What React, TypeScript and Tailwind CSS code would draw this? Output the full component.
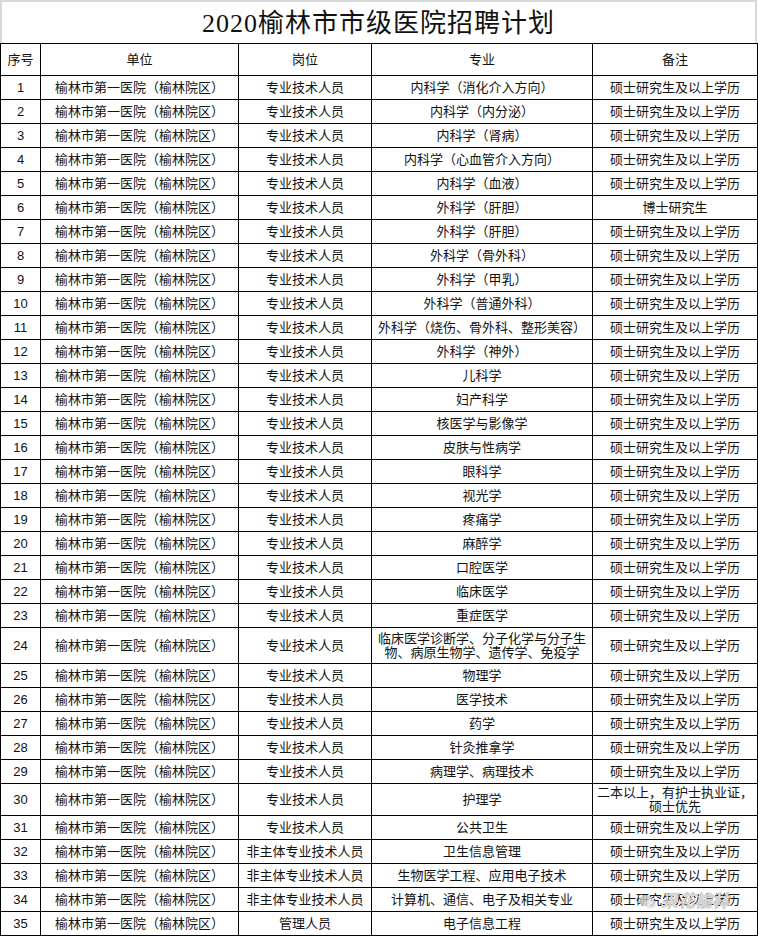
const unit = "榆林市第一医院（榆林院区）"
const tech = "专业技术人员"
const nonMain = "非主体专业技术人员"
const master = "硕士研究生及以上学历"

type Row = { post?: string; major: string[]; note?: string[]; h?: string }

const rows: Row[] = [
  { major: ["内科学（消化介入方向）"] },
  { major: ["内科学（内分泌）"] },
  { major: ["内科学（肾病）"] },
  { major: ["内科学（心血管介入方向）"] },
  { major: ["内科学（血液）"] },
  { major: ["外科学（肝胆）"], note: ["博士研究生"] },
  { major: ["外科学（肝胆）"] },
  { major: ["外科学（骨外科）"] },
  { major: ["外科学（甲乳）"] },
  { major: ["外科学（普通外科）"] },
  { major: ["外科学（烧伤、骨外科、整形美容）"] },
  { major: ["外科学（神外）"] },
  { major: ["儿科学"] },
  { major: ["妇产科学"] },
  { major: ["核医学与影像学"] },
  { major: ["皮肤与性病学"] },
  { major: ["眼科学"] },
  { major: ["视光学"] },
  { major: ["疼痛学"] },
  { major: ["麻醉学"] },
  { major: ["口腔医学"] },
  { major: ["临床医学"] },
  { major: ["重症医学"] },
  {
    major: ["临床医学诊断学、分子化学与分子生", "物、病原生物学、遗传学、免疫学"],
    h: "h-[36px]",
  },
  { major: ["物理学"] },
  { major: ["医学技术"] },
  { major: ["药学"] },
  { major: ["针灸推拿学"] },
  { major: ["病理学、病理技术"] },
  { major: ["护理学"], note: ["二本以上，有护士执业证，", "硕士优先"], h: "h-[32px]" },
  { major: ["公共卫生"] },
  { post: nonMain, major: ["卫生信息管理"] },
  { post: nonMain, major: ["生物医学工程、应用电子技术"] },
  { post: nonMain, major: ["计算机、通信、电子及相关专业"] },
  { post: "管理人员", major: ["电子信息工程"] },
]

const cell = "border-r border-b border-black flex flex-col items-center justify-center text-center leading-[14px]"

export default function App() {
  return (
    <div
      className="w-[758px] h-[937px] bg-white text-[#111] text-[13px] overflow-hidden relative"
      style={{ fontFamily: '"Liberation Sans", "Noto Sans CJK SC", sans-serif' }}
    >
      {/* Title */}
      <div className="h-[43px] w-[757px] border-t-2 border-l-2 border-r-2 border-[#d9d9d9] flex items-center justify-center">
        <h1
          className="text-[26px] tracking-[1px] pt-[2px]"
          style={{ fontFamily: '"Liberation Serif", "Noto Sans CJK SC", serif' }}
        >
          2020榆林市市级医院招聘计划
        </h1>
      </div>

      {/* Table */}
      <div className="w-[758px] border-t border-l border-black grid grid-cols-[40px_198px_133px_221px_165px]">
        <div className={`${cell} h-[32px]`}>序号</div>
        <div className={`${cell} h-[32px]`}>单位</div>
        <div className={`${cell} h-[32px]`}>岗位</div>
        <div className={`${cell} h-[32px]`}>专业</div>
        <div className={`${cell} h-[32px]`}>备注</div>

        {rows.map((r, i) => {
          const h = r.h ?? "h-[24px]"
          return (
            <div key={i} className="contents">
              <div className={`${cell} ${h}`}>{i + 1}</div>
              <div className={`${cell} ${h}`}>{unit}</div>
              <div className={`${cell} ${h}`}>{r.post ?? tech}</div>
              <div className={`${cell} ${h}`}>
                {r.major.map((m) => (
                  <span key={m}>{m}</span>
                ))}
              </div>
              <div className={`${cell} ${h}`}>
                {(r.note ?? [master]).map((n) => (
                  <span key={n}>{n}</span>
                ))}
              </div>
            </div>
          )
        })}
      </div>

      {/* Watermark */}
      <div className="absolute left-[638px] top-[889px] flex items-center gap-[3px] pointer-events-none">
        <svg width="20" height="16" viewBox="0 0 20 16" className="opacity-80">
          <ellipse cx="7.5" cy="6.5" rx="6.5" ry="5.5" fill="#c8c8c8" />
          <ellipse cx="13" cy="10" rx="5.5" ry="4.5" fill="#e0e0e0" />
        </svg>
        <span
          className="text-[17px] font-bold italic text-[#d8d8d8]"
          style={{ textShadow: "0 0 1px #888" }}
        >
          采花榆林
        </span>
      </div>
    </div>
  )
}
